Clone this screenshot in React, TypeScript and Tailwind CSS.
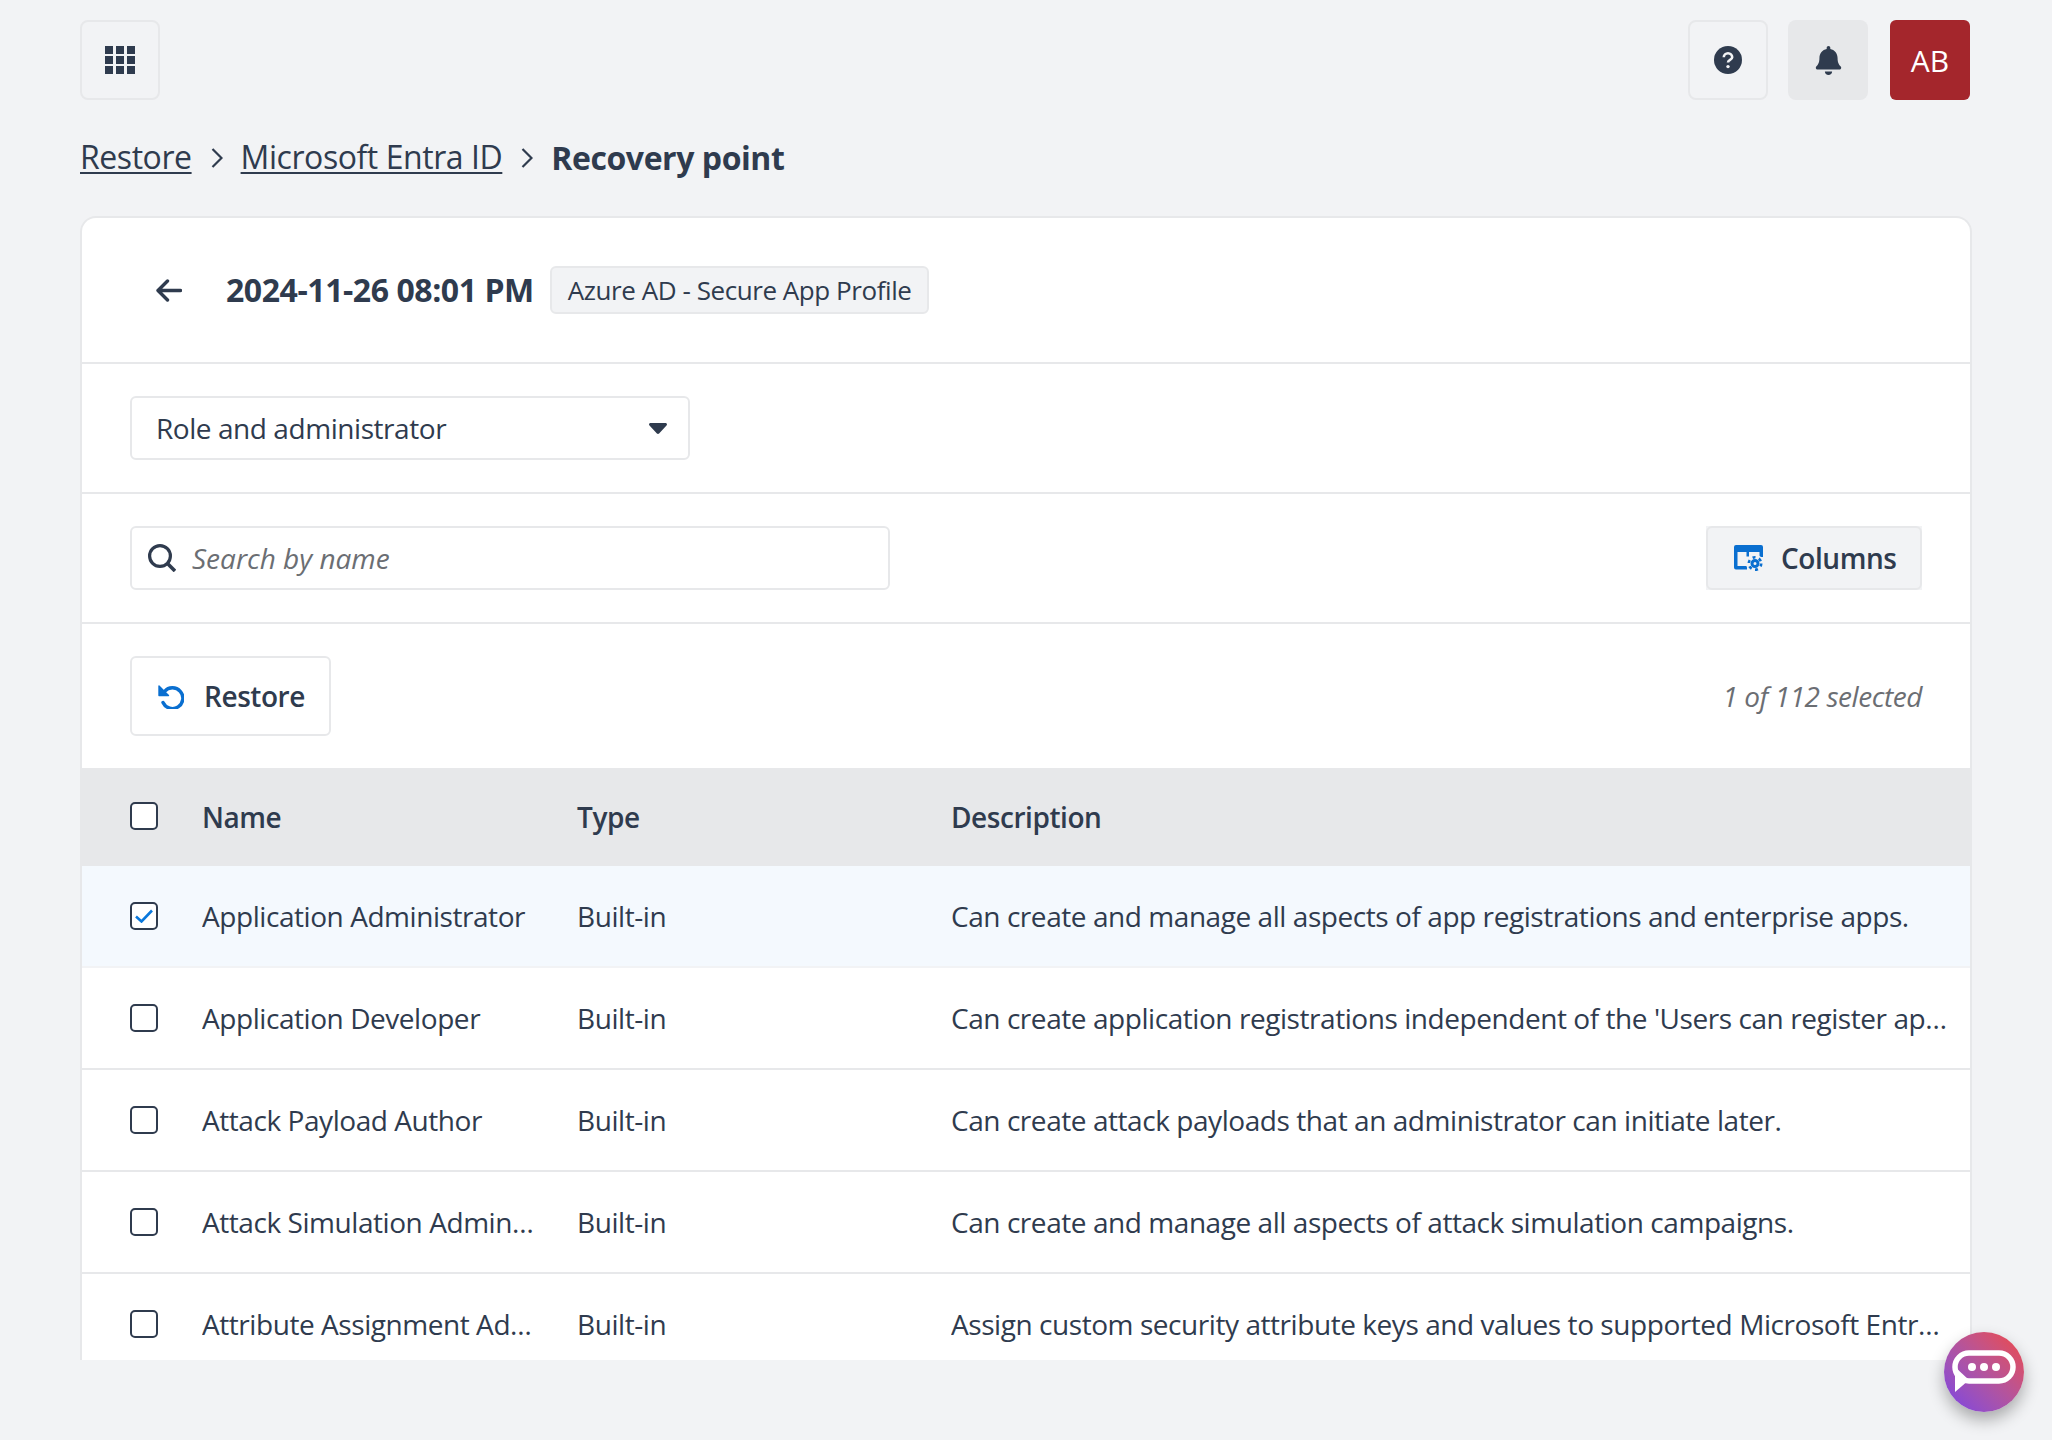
import { FaBell } from 'react-icons/fa';

const rows = [
  {
    name: 'Application Administrator',
    type: 'Built-in',
    description: 'Can create and manage all aspects of app registrations and enterprise apps.',
    checked: true,
  },
  {
    name: 'Application Developer',
    type: 'Built-in',
    description: "Can create application registrations independent of the 'Users can register applications' setting.",
  },
  {
    name: 'Attack Payload Author',
    type: 'Built-in',
    description: 'Can create attack payloads that an administrator can initiate later.',
  },
  {
    name: 'Attack Simulation Administrator',
    type: 'Built-in',
    description: 'Can create and manage all aspects of attack simulation campaigns.',
  },
  {
    name: 'Attribute Assignment Administrator',
    type: 'Built-in',
    description: 'Assign custom security attribute keys and values to supported Microsoft Entra ID objects.',
  },
];

function Checkbox({ checked }: { checked?: boolean }) {
  return (
    <span className="flex h-[28px] w-[28px] items-center justify-center rounded-[5px] border-2 border-[#2f3b4e] bg-white">
      {checked && (
        <svg viewBox="0 0 18 14" className="h-[14px] w-[18px]" fill="none">
          <path d="M1 7.5 6.5 12.5 17 1.5" stroke="#0a78dc" strokeWidth="2.6" />
        </svg>
      )}
    </span>
  );
}

function Chevron() {
  return (
    <svg viewBox="0 0 12 20" className="ml-[19px] mr-[18px] h-[20px] w-[12px]" fill="none">
      <path d="M1.5 1 10.5 10 1.5 19" stroke="#2f3b4e" strokeWidth="2.2" />
    </svg>
  );
}

export default function App() {
  return (
    <div className="h-[1440px] overflow-hidden bg-[#f2f3f5] pl-[80px] pr-[80px] pt-[20px] font-['Open_Sans','Noto_Sans',sans-serif] tracking-[-0.44px] text-[#2f3b4e]">
      {/* Top bar */}
      <div className="flex items-center justify-between pr-[2px]">
        <button className="flex h-[80px] w-[80px] items-center justify-center rounded-[8px] border-2 border-[#e7e8ea]">
          <svg viewBox="0 0 30 28" className="h-[28px] w-[30px]" fill="#2f3b4e">
            <rect x="0" y="0" width="8" height="8" />
            <rect x="11" y="0" width="8" height="8" />
            <rect x="22" y="0" width="8" height="8" />
            <rect x="0" y="10" width="8" height="8" />
            <rect x="11" y="10" width="8" height="8" />
            <rect x="22" y="10" width="8" height="8" />
            <rect x="0" y="20" width="8" height="8" />
            <rect x="11" y="20" width="8" height="8" />
            <rect x="22" y="20" width="8" height="8" />
          </svg>
        </button>
        <div className="flex gap-[20px]">
          <button className="flex h-[80px] w-[80px] items-center justify-center rounded-[8px] border-2 border-[#e7e8ea]">
            <svg viewBox="0 0 28 28" className="h-[28px] w-[28px]" fill="none">
              <circle cx="14" cy="14" r="14" fill="#2f3b4e" />
              <path d="M9.8 11.2a4.2 4 0 0 1 8.4 0c0 2.8-4.2 2.6-4.2 5.2" stroke="#f2f3f5" strokeWidth="2.6" />
              <circle cx="14" cy="20.6" r="1.7" fill="#f2f3f5" />
            </svg>
          </button>
          <button className="flex h-[80px] w-[80px] items-center justify-center rounded-[8px] bg-[#e7e8ea]">
            <FaBell className="h-[29px] w-[29px]" />
          </button>
          <button className="ml-[2px] flex h-[80px] w-[80px] items-center justify-center rounded-[6px] bg-[#a4262c] text-[30px] tracking-normal text-white">
            AB
          </button>
        </div>
      </div>

      {/* Breadcrumb */}
      <div className="mt-[36px] flex h-[44px] items-center text-[32px] leading-[44px]">
        <a className="pb-[3px] underline decoration-[1.5px] underline-offset-[3px]">Restore</a>
        <Chevron />
        <a className="pb-[3px] underline decoration-[1.5px] underline-offset-[3px]">Microsoft Entra ID</a>
        <Chevron />
        <span className="font-bold">Recovery point</span>
      </div>

      {/* Card */}
      <div className="mt-[36px] h-[1144px] overflow-hidden rounded-t-[16px] border-x-2 border-t-2 border-[#e7e8ea] bg-white">
        <div className="flex h-[146px] items-center border-b-2 border-[#e7e8ea] pl-[74px]">
          <svg viewBox="0 0 26 23" className="h-[23px] w-[26px]" fill="none">
            <path d="M24.5 11.5H3M11.5 2 2 11.5 11.5 21" stroke="#2f3b4e" strokeWidth="3.4" strokeLinecap="round" strokeLinejoin="round" />
          </svg>
          <span className="ml-[44px] text-[32px] font-bold leading-[44px]">2024-11-26 08:01 PM</span>
          <span className="ml-[16px] rounded-[6px] border-2 border-[#e7e8ea] bg-[#f2f3f5] px-[16px] py-[4px] text-[26px] leading-[36px]">
            Azure AD - Secure App Profile
          </span>
        </div>

        <div className="border-b-2 border-[#e7e8ea] px-[48px] py-[32px]">
          <div className="flex h-[64px] w-[560px] items-center justify-between rounded-[6px] border-2 border-[#e7e8ea] pl-[24px] pr-[21px] text-[28px]">
            <span>Role and administrator</span>
            <svg viewBox="0 0 18 11" className="h-[11px] w-[18px]" fill="#2f3b4e">
              <path d="M1.5 0h15c1.3 0 2 1.6 1 2.6l-7.4 7.9c-.6.6-1.6.6-2.2 0L.5 2.6C-.5 1.6.2 0 1.5 0Z" />
            </svg>
          </div>
        </div>

        <div className="flex items-center justify-between border-b-2 border-[#e7e8ea] px-[48px] py-[32px]">
          <div className="flex h-[64px] w-[760px] items-center rounded-[6px] border-2 border-[#e7e8ea] pl-[16px] text-[28px]">
            <svg viewBox="0 0 28 28" className="h-[28px] w-[28px]" fill="none">
              <circle cx="12" cy="12" r="10.4" stroke="#2f3b4e" strokeWidth="3.2" />
              <path d="M19.5 19.5 27 27" stroke="#2f3b4e" strokeWidth="3.6" />
            </svg>
            <span className="ml-[16px] italic tracking-normal text-[#6b6e73]">Search by name</span>
          </div>
          <button className="h-[64px] w-[216px] bg-[#f2f3f5] text-[28px] font-semibold">
            <span className="flex h-full items-center gap-[18px] rounded-[6px] border-2 border-[#e7e8ea] pl-[26px]">
              <svg viewBox="0 0 29 26" className="h-[26px] w-[29px] shrink-0">
                <path
                  fill="#0a6fd0"
                  d="M2 0h25a2 2 0 0 1 2 2v10h-3.5V7H15v4.5h-2.5V7h-9v14H13v3.5H2a2 2 0 0 1-2-2V2a2 2 0 0 1 2-2Z"
                />
                <circle cx="21" cy="18.5" r="9" fill="#f2f3f5" />
                <circle cx="21" cy="18.5" r="3" fill="none" stroke="#0a6fd0" strokeWidth="3" />
                <circle cx="21" cy="18.5" r="6.2" fill="none" stroke="#0a6fd0" strokeWidth="2.6" strokeDasharray="3 3.5" />
              </svg>
              Columns
            </span>
          </button>
        </div>

        <div className="flex items-center justify-between px-[48px] py-[32px]">
          <button className="flex h-[80px] w-[201px] items-center gap-[20px] rounded-[6px] border-2 border-[#e7e8ea] pl-[26px] text-[28px] font-semibold">
            <svg viewBox="0 0 26 25" className="h-[25px] w-[26px] shrink-0" fill="none">
              <path d="M6.5 7.5A10.4 10.4 0 1 1 5 18.5" stroke="#0a6fd0" strokeWidth="3.4" strokeLinecap="round" />
              <path d="M1 2v9.5h9.5Z" fill="#0a6fd0" stroke="#0a6fd0" strokeWidth="1.4" strokeLinejoin="round" />
            </svg>
            Restore
          </button>
          <span className="text-[28px] italic text-[#6b6e73]">1 of 112 selected</span>
        </div>

        {/* Table */}
        <div className="flex h-[98px] items-center bg-[#e7e8ea] text-[28px] font-semibold">
          <div className="mb-[3px] w-[120px] shrink-0 pl-[48px]">
            <Checkbox />
          </div>
          <div className="w-[375px] shrink-0">Name</div>
          <div className="w-[374px] shrink-0">Type</div>
          <div>Description</div>
        </div>
        {rows.map((row) => (
          <div
            key={row.name}
            className={`flex h-[102px] items-center border-b-2 text-[28px] ${
              row.checked ? 'border-[#f2f3f5] bg-[#f4f9fe]' : 'border-[#e7e8ea]'
            }`}
          >
            <div className="w-[120px] shrink-0 pl-[48px]">
              <Checkbox checked={row.checked} />
            </div>
            <div className="w-[375px] shrink-0 truncate pr-[40px]">{row.name}</div>
            <div className="w-[374px] shrink-0">{row.type}</div>
            <div className="min-w-0 flex-1 truncate pr-[22px]">{row.description}</div>
          </div>
        ))}
      </div>

      {/* Chat launcher */}
      <button className="absolute left-[1944px] top-[1332px] flex h-[80px] w-[80px] items-center justify-center rounded-full bg-gradient-to-tr from-[#7c3ee6] to-[#f0433c] shadow-[0_8px_16px_rgba(0,0,0,0.3)]">
        <svg viewBox="0 0 64 44" className="h-[44px] w-[64px]" fill="none">
          <rect x="3" y="3" width="58" height="28" rx="14" stroke="white" strokeWidth="5.5" />
          <path d="M3 17v25l14-12" fill="white" />
          <circle cx="20" cy="17" r="4" fill="white" />
          <circle cx="32" cy="17" r="4" fill="white" />
          <circle cx="44" cy="17" r="4" fill="white" />
        </svg>
      </button>
    </div>
  );
}
